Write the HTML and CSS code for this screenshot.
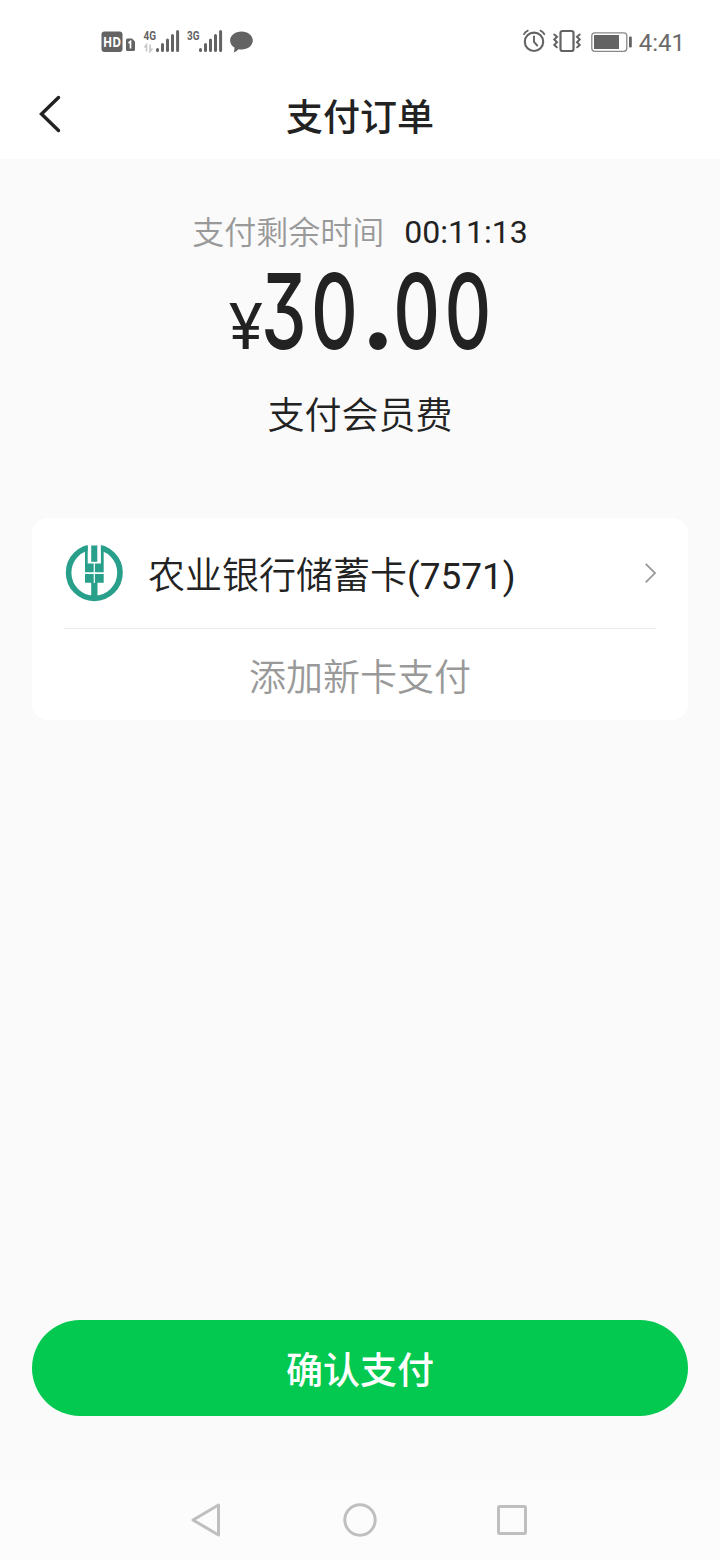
FILE: index.html
```html
<!DOCTYPE html>
<html lang="zh-CN">
<head>
<meta charset="utf-8">
<title>支付订单</title>
<link rel="stylesheet" href="styles.css">
</head>
<body>
<div class="screen">
  <div class="status">
    <svg class="status-left" width="156" height="28" viewBox="100 28 156 28">
      <rect x="101.500" y="31.500" width="21" height="20.500" rx="3" fill="#636363"/>
      <text x="112" y="46.800" class="hd" text-anchor="middle" textLength="18" lengthAdjust="spacingAndGlyphs">HD</text>
      <path d="M126 40q0-1.500 1.500-1.500h4.500l3 3v8q0 1.500-1.500 1.500h-6q-1.500 0-1.500-1.500z" fill="#636363"/>
      <path d="M128.500 43l2-1.500v7" fill="none" stroke="#fff" stroke-width="1.700"/>
      <text x="143.500" y="39.500" class="net" textLength="12.500" lengthAdjust="spacingAndGlyphs">4G</text>
      <path d="M144.500 47.500l2-2.500v6.500M150 44.500v7l2.500-3" fill="none" stroke="#c9c9c9" stroke-width="1.700"/>
      <path d="M157.500 49.500v1M162.500 44.500v6M167.500 40v10.500M172.500 35.500v15M177.600 31.500v19" class="bars"/>
      <text x="187" y="39.500" class="net" textLength="12.500" lengthAdjust="spacingAndGlyphs">3G</text>
      <path d="M200.500 49.500v1M205.500 44.500v6M210.500 40v10.500M215.500 35.500v15M220.600 31.500v19" class="bars"/>
      <path d="M241.500 31.500c6.500 0 11.300 4 11.300 9s-4.800 9-11.300 9q-1.600 0-3-.3-2 2.300-4.800 3.200.9-2 .8-4.800c-2.800-1.700-4.400-4.200-4.400-7.100 0-5 4.900-9 11.400-9z" fill="#636363"/>
    </svg>
    <div class="status-right">
      <svg width="112" height="28" viewBox="521 28 112 28">
        <g fill="none" stroke="#636363" stroke-linecap="round">
          <circle cx="534" cy="41.800" r="9.200" stroke-width="2.100"/>
          <path d="M534 36.500v5.500l3.200 3.500" stroke-width="1.900"/>
          <path d="M524 34.200q1.200-2.500 3.800-3.600M540.500 30.600q2.600 1.100 3.800 3.600" stroke-width="1.800"/>
          <rect x="560.500" y="31" width="13" height="20" rx="2" stroke-width="2.200"/>
          <path d="M554.300 34.500l2.700 2.300-2.700 2.700 2.700 2.700-2.700 2.700 2.500 2.300M579.700 34.500l-2.700 2.300 2.700 2.700-2.700 2.700 2.700 2.700-2.500 2.300" stroke-width="2"/>
          <rect x="591.800" y="32.800" width="35" height="18.500" rx="3" stroke="#888" stroke-width="1.300"/>
        </g>
        <rect x="594" y="35" width="25" height="14" fill="#636363"/>
        <rect x="629" y="36.500" width="2.800" height="11" rx="1" fill="#636363"/>
      </svg>
      <span class="clock">4:41</span>
    </div>
  </div>
  <header class="header">
    <svg class="back" width="28" height="42" viewBox="36 93 28 42"><path d="M58.500 97.500L41.500 114l17 16.500" fill="none" stroke="#222" stroke-width="3.400" stroke-linecap="round"/></svg>
    <h1 class="title">支付订单</h1>
  </header>
  <main class="main">
    <div class="countdown"><span class="label">支付剩余时间</span><span class="time">00:11:13</span></div>
    <div class="amount"><span class="yen">¥</span><span class="digits">30<span class="dot">.</span>00</span></div>
    <div class="subject">支付会员费</div>
    <section class="card">
      <div class="bank">
        <svg class="logo" width="60" height="60" viewBox="64 542 60 60">
          <circle cx="94.300" cy="571.700" r="25.700" fill="none" stroke="#289f8b" stroke-width="5.600"/>
          <path d="M87.700 542h13.200v20H87.700z" fill="#fff"/>
          <path d="M85 546l2.700-.8v17.300h13.200v-17.300l2.800.8v25.300H85zM85 573h18.700v8.700h-6.200v15h-6.300v-15H85z" fill="#289f8b"/>
          <path d="M91.200 544.500h6.100v16.300h-6.100z" fill="#289f8b"/>
          <path d="M94.300 562v20" stroke="#fff" stroke-width="1.200"/>
        </svg>
        <span class="bank-name">农业银行储蓄卡<span class="number">(7571)</span></span>
        <svg class="chevron" width="16" height="24" viewBox="642 561 16 24"><path d="M645.700 563.800l9.300 9.300-9.300 9.300" fill="none" stroke="#999" stroke-width="1.800"/></svg>
      </div>
      <div class="add">添加新卡支付</div>
    </section>
    <button class="confirm">确认支付</button>
  </main>
  <nav class="nav">
    <svg width="360" height="44" viewBox="180 1498 360 44" fill="none" stroke="#bfbfbf" stroke-width="3" stroke-linejoin="round">
      <path d="M193 1520l25.500-15v30z"/>
      <circle cx="360" cy="1520" r="15.200"/>
      <rect x="498.500" y="1506.500" width="27" height="27" rx="1"/>
    </svg>
  </nav>
</div>
</body>
</html>
```
FILE: styles.css
```css
* { box-sizing: border-box; }
body {
  margin: 0;
  background: #fafafa;
  color: #222;
  font-family: Roboto, "Noto Sans CJK SC", sans-serif;
}
.screen {
  display: flex;
  flex-direction: column;
  width: 720px;
  height: 1560px;
}
.status {
  display: flex;
  justify-content: space-between;
  height: 72px;
  padding: 28px 36px 0 100px;
  background: #fff;
}
.status svg { display: block; }
.hd { font: 700 14px "Open Sans", sans-serif; fill: #fff; }
.net { font: 700 13px Roboto, sans-serif; fill: #636363; }
.bars { fill: none; stroke: #636363; stroke-width: 3; stroke-linecap: round; }
.status-right { display: flex; gap: 6px; margin-right: -1px; }
.clock {
  font-size: 24px;
  line-height: 30px;
  color: #6b6b6b;
}
.header {
  display: grid;
  grid-template-columns: 1fr auto 1fr;
  height: 87px;
  padding: 0 36px;
  background: #fff;
}
.back { margin-top: 21px; }
.title {
  margin: 0;
  font-size: 37px;
  font-weight: 500;
  line-height: 93px;
}
.main {
  display: flex;
  flex-direction: column;
  flex: 1;
  padding: 49px 32px 64px;
}
.countdown {
  display: flex;
  justify-content: center;
  gap: 20px;
  height: 48px;
  font-size: 32px;
  line-height: 48px;
}
.label { color: #999; font-weight: 350; line-height: 50px; }
.amount {
  display: flex;
  align-items: baseline;
  height: 110px;
  padding-left: 197px;
  line-height: 110px;
}
.yen {
  width: 32px;
  font-size: 64px;
}
.digits {
  font-family: Inter, sans-serif;
  font-feature-settings: "cv09";
  font-size: 105px;
  font-weight: 450;
  letter-spacing: 6.5px;
  transform: scaleX(.69);
  transform-origin: left;
}
.dot {
  display: inline-block;
  width: 45px;
  font-size: 98px;
  font-weight: 800;
  letter-spacing: 0;
  text-align: center;
  transform: scaleX(1.4);
}
.subject {
  height: 60px;
  margin-top: 18px;
  font-size: 37px;
  font-weight: 350;
  line-height: 66px;
  text-align: center;
}
.card {
  height: 202px;
  margin-top: 74px;
  padding: 0 32px;
  border-radius: 16px;
  background: #fff;
}
.bank {
  display: flex;
  align-items: center;
  height: 111px;
  border-bottom: 1px solid #e9e9e9;
}
.bank-name {
  flex: 1;
  margin-left: 24px;
  font-size: 37px;
  font-weight: 350;
}
.number { font-weight: 400; }
.chevron { margin-right: -2px; }
.add {
  height: 91px;
  color: #999;
  font-size: 37px;
  font-weight: 350;
  line-height: 100px;
  text-align: center;
}
.confirm {
  height: 96px;
  margin-top: auto;
  padding: 7px 0 0;
  border: 0;
  border-radius: 48px;
  background: #03c950;
  color: #fff;
  font: 500 37px/89px Roboto, "Noto Sans CJK SC", sans-serif;
}
.nav {
  display: flex;
  align-items: center;
  justify-content: center;
  height: 80px;
  background: #fcfcfc;
}
```
